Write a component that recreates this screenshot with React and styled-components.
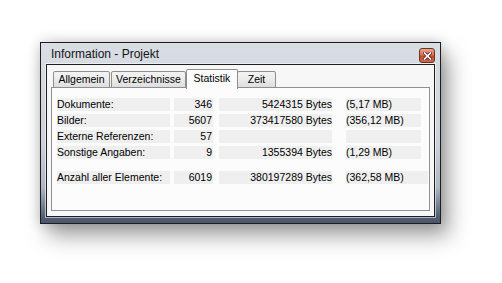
import React from 'react'
import styled, { createGlobalStyle } from 'styled-components'

const GlobalStyle = createGlobalStyle`
  html, body {
    margin: 0;
    padding: 0;
    background: #ffffff;
  }
  body {
    font-family: "Liberation Sans", Arial, sans-serif;
  }
`

const Page = styled.div`
  padding: 42px 0 0 40px;
  width: 502px;
  height: 283px;
  box-sizing: border-box;
`

const Window = styled.div`
  width: 401px;
  height: 182px;
  box-sizing: border-box;
  border: 1px solid #1c1c1c;
  background: linear-gradient(to bottom, #d9dde4 0%, #cdd2da 55%, #aeb7c4 80%, #4f5c73 97%, #4a566c 100%);
  box-shadow: 8px 12px 20px rgba(0, 0, 0, 0.36), 0 0 12px rgba(0, 0, 0, 0.2);
  padding: 0 5px 6px 5px;
  display: flex;
  flex-direction: column;
`

const TitleBar = styled.div`
  height: 21px;
  display: flex;
  align-items: center;
  justify-content: space-between;
  padding: 0 0 0 5px;
`

const Title = styled.span`
  font-size: 12px;
  color: #151515;
  margin-top: 1px;
`

const CloseButton = styled.div`
  width: 16px;
  height: 15px;
  box-sizing: border-box;
  margin: 4px 0 0 0;
  border: 1px solid #6d3426;
  border-radius: 3px;
  background: linear-gradient(to bottom, #e9a392 0%, #d9745a 45%, #c24a2d 55%, #d06a4a 100%);
  display: flex;
  align-items: center;
  justify-content: center;
`

const Body = styled.div`
  flex: 1;
  border: 1px solid #1e1e1e;
  box-shadow: 0 0 0 1px rgba(255, 255, 255, 0.55);
  background: #f7f7f7;
  padding: 4px;
  display: flex;
  flex-direction: column;
`

const TabRow = styled.div`
  height: 19px;
  display: flex;
  align-items: flex-start;
  padding-left: 2px;
  position: relative;
  z-index: 1;
`

const Tab = styled.div`
  box-sizing: border-box;
  width: ${p => p.$w}px;
  height: ${p => (p.$active ? 20 : 17)}px;
  margin-top: ${p => (p.$active ? 0 : 2)}px;
  margin-left: ${p => p.$ml}px;
  border: 1px solid #8d8e90;
  border-bottom: ${p => (p.$active ? 'none' : '1px solid #8d8e90')};
  border-radius: 2px 2px 0 0;
  background: ${p => (p.$active ? '#fcfcfc' : 'linear-gradient(to bottom, #f3f3f3 0%, #ebebeb 50%, #dedede 100%)')};
  font-size: 10.5px;
  color: #000;
  display: flex;
  justify-content: center;
  padding-top: ${p => (p.$active ? 2 : 1)}px;
  position: relative;
  z-index: ${p => (p.$active ? 2 : 1)};
`

const Panel = styled.div`
  height: 124px;
  box-sizing: border-box;
  margin-top: -1px;
  border: 1px solid #8f9093;
  background: #fcfcfc;
  padding: 10px 0 0 5px;
`

const Grid = styled.div`
  display: grid;
  grid-template-columns: 113px 43px 119px 89px;
  row-gap: 3px;
`

const Row = styled.div`
  display: contents;
`

const Cell = styled.div`
  height: 13px;
  background: #efefef;
  font-size: 10.5px;
  line-height: 13px;
  color: #000;
  white-space: nowrap;
  text-align: ${p => p.$align || 'left'};
  margin-left: ${p => p.$ml || 0}px;
  margin-right: ${p => p.$mr || 0}px;
  margin-top: ${p => p.$mt || 0}px;
  padding-right: ${p => p.$pr || 0}px;
`

const rows = [
  { label: 'Dokumente:', count: '346', bytes: '5424315 Bytes', mb: '(5,17 MB)' },
  { label: 'Bilder:', count: '5607', bytes: '373417580 Bytes', mb: '(356,12 MB)' },
  { label: 'Externe Referenzen:', count: '57', bytes: '', mb: '' },
  { label: 'Sonstige Angaben:', count: '9', bytes: '1355394 Bytes', mb: '(1,29 MB)' },
]

const total = { label: 'Anzahl aller Elemente:', count: '6019', bytes: '380197289 Bytes', mb: '(362,58 MB)' }

const tabs = [
  { name: 'Allgemein', w: 57, ml: 0 },
  { name: 'Verzeichnisse', w: 75, ml: 1 },
  { name: 'Statistik', w: 52, ml: 0, active: true },
  { name: 'Zeit', w: 39, ml: -1 },
]

const CloseIcon = () => (
  <svg width="9" height="8" viewBox="0 0 9 8">
    <path d="M1.5 1 L7.5 7 M7.5 1 L1.5 7" stroke="#5a2a20" strokeWidth="3.2" strokeLinecap="square" />
    <path d="M1.5 1 L7.5 7 M7.5 1 L1.5 7" stroke="#ffffff" strokeWidth="1.6" strokeLinecap="square" />
  </svg>
)

const StatRow = ({ data, mt, wide }) => (
  <Row>
    <Cell $mt={mt}>{data.label}</Cell>
    <Cell $mt={mt} $align="right" $ml={4} $pr={1}>{data.count}</Cell>
    <Cell $mt={mt} $align="right" $ml={6}>{data.bytes}</Cell>
    <Cell $mt={mt} $ml={14} $mr={wide ? -7 : 0}>{data.mb}</Cell>
  </Row>
)

export default function App() {
  return (
    <Page>
      <GlobalStyle />
      <Window>
        <TitleBar>
          <Title>Information - Projekt</Title>
          <CloseButton>
            <CloseIcon />
          </CloseButton>
        </TitleBar>
        <Body>
          <TabRow>
            {tabs.map(t => (
              <Tab key={t.name} $w={t.w} $ml={t.ml} $active={t.active}>
                {t.name}
              </Tab>
            ))}
          </TabRow>
          <Panel>
            <Grid>
              {rows.map(r => (
                <StatRow key={r.label} data={r} />
              ))}
              <StatRow data={total} mt={9} wide />
            </Grid>
          </Panel>
        </Body>
      </Window>
    </Page>
  )
}
